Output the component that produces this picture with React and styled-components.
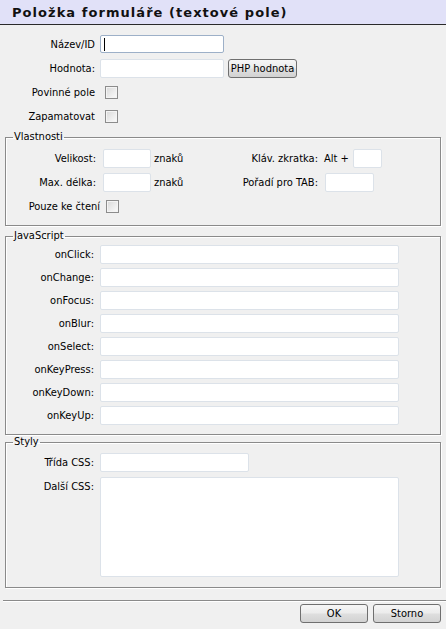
import React from "react";
import styled, { createGlobalStyle } from "styled-components";

const Global = createGlobalStyle`
  html, body { margin: 0; padding: 0; background: #f0f0f0; }
  body {
    font-family: "DejaVu Sans Condensed", "Liberation Sans", Arial, sans-serif;
    font-stretch: condensed;
    font-size: 11px;
    color: #000;
  }
  * { box-sizing: border-box; }
`;

const Page = styled.div`
  width: 446px;
  height: 629px;
  display: flex;
  flex-direction: column;
  background: #f0f0f0;
`;

const TitleBar = styled.div`
  height: 25px;
  background: #e1e1f8;
  border-bottom: 1px solid #2a2a2a;
  display: flex;
  align-items: center;
  padding-left: 12px;
  font-family: "DejaVu Sans", Verdana, sans-serif;
  font-stretch: normal;
  font-weight: bold;
  font-size: 13px;
  letter-spacing: 1.05px;
  color: #111;
`;

const Section = styled.div`
  display: flex;
  flex-direction: column;
  padding-top: ${(p) => p.$top || 0}px;
`;

const Row = styled.div`
  display: flex;
  align-items: ${(p) => (p.$top ? "flex-start" : "center")};
  height: ${(p) => (p.$h ? `${p.$h}px` : "auto")};
  padding-top: ${(p) => p.$pt || 0}px;
`;

const Label = styled.label`
  width: ${(p) => p.$w}px;
  flex: none;
  text-align: right;
  margin-right: ${(p) => p.$gap ?? 5}px;
  white-space: nowrap;
  padding-top: ${(p) => p.$pt || 0}px;
`;

const Text = styled.span`
  width: ${(p) => (p.$w ? `${p.$w}px` : "auto")};
  flex: none;
  margin-left: ${(p) => p.$ml || 0}px;
  margin-right: ${(p) => p.$mr || 0}px;
  white-space: nowrap;
`;

const Field = styled.input`
  width: ${(p) => p.$w}px;
  height: ${(p) => p.$h || 19}px;
  flex: none;
  margin: 0;
  padding: 1px 3px;
  border: 1px solid ${(p) => (p.$focus ? "#9db0c8" : "#dce2e9")};
  border-radius: 2px;
  background: #fff;
  font: inherit;
  outline: none;
`;

const Area = styled.textarea`
  width: ${(p) => p.$w}px;
  height: ${(p) => p.$h}px;
  flex: none;
  margin: 0;
  padding: 2px 3px;
  border: 1px solid #dce2e9;
  border-radius: 2px;
  background: #fff;
  resize: none;
  font: inherit;
  outline: none;
`;

const CaretWrap = styled.span`
  position: relative;
  display: inline-flex;
`;

const Caret = styled.span`
  position: absolute;
  left: 4px;
  top: 3px;
  width: 1px;
  height: 13px;
  background: #000;
`;

const Check = styled.input.attrs({ type: "checkbox" })`
  appearance: none;
  -webkit-appearance: none;
  width: 13px;
  height: 13px;
  flex: none;
  margin: 0 0 0 ${(p) => p.$ml || 0}px;
  border: 1px solid #8c8c8c;
  background: linear-gradient(135deg, #d8d8d8 0%, #eeeeee 60%, #fbfbfb 100%);
  box-shadow: inset 0 0 0 1px #f4f4f4;
`;

const Button = styled.button`
  width: ${(p) => p.$w || 68}px;
  height: 19px;
  flex: none;
  margin: 0 0 0 ${(p) => p.$ml || 0}px;
  padding: 0;
  border: 1px solid #6f6f6f;
  border-radius: 3px;
  background: linear-gradient(#f6f6f6 0%, #ececec 45%, #dedede 55%, #d2d2d2 100%);
  font: inherit;
  color: #000;
`;

const Group = styled.fieldset`
  margin: ${(p) => p.$mt || 0}px 5px 0 5px;
  padding: ${(p) => p.$pt || 0}px 0 ${(p) => p.$pb || 0}px 0;
  border: 1px solid #8a8a8a;
  box-shadow: inset 1px 1px 0 #ffffff, 1px 1px 0 #ffffff;
  min-width: 0;
`;

const Legend = styled.legend`
  margin-left: 7px;
  padding: 0 1px;
  line-height: 14px;
  font-size: 11px;
`;

const Footer = styled.div`
  margin-top: 12px;
  margin-left: 3px;
  border-top: 1px solid #8a8a8a;
  box-shadow: inset 0 1px 0 #ffffff;
  padding: 3px 5px 0 0;
  display: flex;
  justify-content: flex-end;
  gap: 5px;
`;

const jsEvents = [
  "onClick:",
  "onChange:",
  "onFocus:",
  "onBlur:",
  "onSelect:",
  "onKeyPress:",
  "onKeyDown:",
  "onKeyUp:",
];

export default function App() {
  return (
    <Page>
      <Global />
      <TitleBar>Položka formuláře (textové pole)</TitleBar>

      <Section $top={7}>
        <Row $h={24}>
          <Label $w={95}>Název/ID</Label>
          <CaretWrap>
            <Field $w={124} $h={18} $focus />
            <Caret />
          </CaretWrap>
        </Row>
        <Row $h={24}>
          <Label $w={95}>Hodnota:</Label>
          <Field $w={124} />
          <Button $w={69} $ml={4}>PHP hodnota</Button>
        </Row>
        <Row $h={24}>
          <Label $w={95} $gap={10}>Povinné pole</Label>
          <Check />
        </Row>
        <Row $h={24}>
          <Label $w={95} $gap={10}>Zapamatovat</Label>
          <Check />
        </Row>
      </Section>

      <Group $mt={2} $pt={2} $pb={7}>
        <Legend>Vlastnosti</Legend>
        <Row $h={24}>
          <Label $w={90} $gap={7}>Velikost:</Label>
          <Field $w={48} />
          <Text $w={48} $ml={3}>znaků</Text>
          <Label $w={116} $gap={6}>Kláv. zkratka:</Label>
          <Text $mr={4}>Alt +</Text>
          <Field $w={29} />
        </Row>
        <Row $h={24}>
          <Label $w={90} $gap={7}>Max. délka:</Label>
          <Field $w={48} />
          <Text $w={48} $ml={3}>znaků</Text>
          <Label $w={116} $gap={7}>Pořadí pro TAB:</Label>
          <Field $w={49} />
        </Row>
        <Row $h={24}>
          <Label $w={94} $gap={6}>Pouze ke čtení</Label>
          <Check />
        </Row>
      </Group>

      <Group $mt={3} $pt={0} $pb={7}>
        <Legend>JavaScript</Legend>
        {jsEvents.map((ev) => (
          <Row key={ev} $h={23}>
            <Label $w={88} $gap={6}>{ev}</Label>
            <Field $w={299} />
          </Row>
        ))}
      </Group>

      <Group $mt={0} $pt={1} $pb={10}>
        <Legend>Styly</Legend>
        <Row $h={24}>
          <Label $w={88} $gap={6}>Třída CSS:</Label>
          <Field $w={149} />
        </Row>
        <Row $top $pt={3}>
          <Label $w={88} $gap={6} $pt={3}>Další CSS:</Label>
          <Area $w={299} $h={100} />
        </Row>
      </Group>

      <Footer>
        <Button $w={68}>OK</Button>
        <Button $w={68}>Storno</Button>
      </Footer>
    </Page>
  );
}
